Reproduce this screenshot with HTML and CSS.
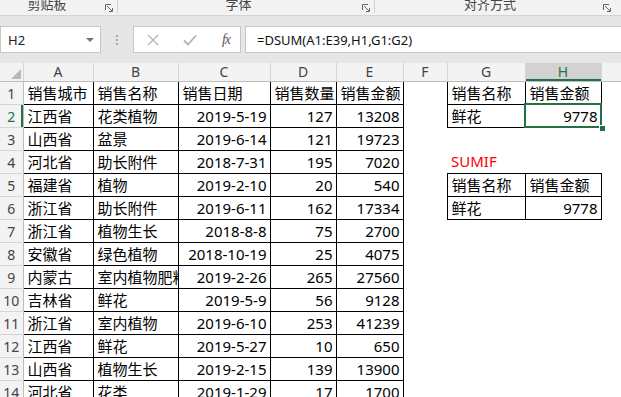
FILE: index.html
```html
<!DOCTYPE html>
<html lang="zh">
<head>
<meta charset="utf-8">
<title>Excel DSUM</title>
<link rel="stylesheet" href="styles.css">
</head>
<body>
<div class="app">
  <div class="ribbon">
    <div class="grp g1"><span class="glabel">剪贴板</span><svg class="launch" width="8" height="8" viewBox="0 0 8 8"><path d="M0.5 6V0.5H6M2 2L7 7M4 7.5H7.5V4" fill="none" stroke="#666" stroke-width="1"/></svg></div>
    <div class="grp g2"><span class="glabel">字体</span><svg class="launch" width="8" height="8" viewBox="0 0 8 8"><path d="M0.5 6V0.5H6M2 2L7 7M4 7.5H7.5V4" fill="none" stroke="#666" stroke-width="1"/></svg></div>
    <div class="grp g3"><span class="glabel">对齐方式</span><svg class="launch" width="8" height="8" viewBox="0 0 8 8"><path d="M0.5 6V0.5H6M2 2L7 7M4 7.5H7.5V4" fill="none" stroke="#666" stroke-width="1"/></svg></div>
  </div>
  <div class="fbar">
    <div class="namebox"><span>H2</span><svg width="8" height="4" viewBox="0 0 8 4"><path d="M0 0H8L4 4Z" fill="#777"/></svg></div>
    <div class="dots"><i></i><i></i><i></i></div>
    <div class="fxbox">
      <svg width="12" height="12" viewBox="0 0 12 12"><path d="M1 1L11 11M11 1L1 11" stroke="#b3b3b3" stroke-width="1.3" fill="none"/></svg>
      <svg width="14" height="12" viewBox="0 0 14 12"><path d="M1 6.5L5 10.5L13 1.5" stroke="#b3b3b3" stroke-width="1.8" fill="none"/></svg>
      <span class="fx">fx</span>
    </div>
    <div class="formula">=DSUM(A1:E39,H1,G1:G2)</div>
  </div>
  <table class="sheet">
    <colgroup>
      <col class="c-rh"><col class="c-a"><col class="c-b"><col class="c-c"><col class="c-d"><col class="c-e"><col class="c-f"><col class="c-g"><col class="c-h"><col class="c-i">
    </colgroup>
    <tr class="hdr">
      <th class="corner"><span class="tri"></span></th><th>A</th><th>B</th><th>C</th><th>D</th><th>E</th><th>F</th><th>G</th><th class="hsel">H</th><th></th>
    </tr>
    <tr><th class="rh">1</th><td class="b">销售城市</td><td class="b">销售名称</td><td class="b">销售日期</td><td class="b">销售数量</td><td class="b">销售金额</td><td></td><td class="b">销售名称</td><td class="b">销售金额</td><td></td></tr>
    <tr><th class="rh rsel">2</th><td class="b">江西省</td><td class="b">花类植物</td><td class="b r">2019-5-19</td><td class="b r">127</td><td class="b r">13208</td><td></td><td class="b">鲜花</td><td class="b r active">9778<span class="selbox"></span><span class="handle"></span></td><td></td></tr>
    <tr><th class="rh">3</th><td class="b">山西省</td><td class="b">盆景</td><td class="b r">2019-6-14</td><td class="b r">121</td><td class="b r">19723</td><td></td><td></td><td></td><td></td></tr>
    <tr><th class="rh">4</th><td class="b">河北省</td><td class="b">助长附件</td><td class="b r">2018-7-31</td><td class="b r">195</td><td class="b r">7020</td><td></td><td class="red">SUMIF</td><td></td><td></td></tr>
    <tr><th class="rh">5</th><td class="b">福建省</td><td class="b">植物</td><td class="b r">2019-2-10</td><td class="b r">20</td><td class="b r">540</td><td></td><td class="b">销售名称</td><td class="b">销售金额</td><td></td></tr>
    <tr><th class="rh">6</th><td class="b">浙江省</td><td class="b">助长附件</td><td class="b r">2019-6-11</td><td class="b r">162</td><td class="b r">17334</td><td></td><td class="b">鲜花</td><td class="b r">9778</td><td></td></tr>
    <tr><th class="rh">7</th><td class="b">浙江省</td><td class="b">植物生长</td><td class="b r">2018-8-8</td><td class="b r">75</td><td class="b r">2700</td><td></td><td></td><td></td><td></td></tr>
    <tr><th class="rh">8</th><td class="b">安徽省</td><td class="b">绿色植物</td><td class="b r">2018-10-19</td><td class="b r">25</td><td class="b r">4075</td><td></td><td></td><td></td><td></td></tr>
    <tr><th class="rh">9</th><td class="b">内蒙古</td><td class="b">室内植物肥料</td><td class="b r">2019-2-26</td><td class="b r">265</td><td class="b r">27560</td><td></td><td></td><td></td><td></td></tr>
    <tr><th class="rh">10</th><td class="b">吉林省</td><td class="b">鲜花</td><td class="b r">2019-5-9</td><td class="b r">56</td><td class="b r">9128</td><td></td><td></td><td></td><td></td></tr>
    <tr><th class="rh">11</th><td class="b">浙江省</td><td class="b">室内植物</td><td class="b r">2019-6-10</td><td class="b r">253</td><td class="b r">41239</td><td></td><td></td><td></td><td></td></tr>
    <tr><th class="rh">12</th><td class="b">江西省</td><td class="b">鲜花</td><td class="b r">2019-5-27</td><td class="b r">10</td><td class="b r">650</td><td></td><td></td><td></td><td></td></tr>
    <tr><th class="rh">13</th><td class="b">山西省</td><td class="b">植物生长</td><td class="b r">2019-2-15</td><td class="b r">139</td><td class="b r">13900</td><td></td><td></td><td></td><td></td></tr>
    <tr><th class="rh">14</th><td class="b">河北省</td><td class="b">花类</td><td class="b r">2019-1-29</td><td class="b r">17</td><td class="b r">1700</td><td></td><td></td><td></td><td></td></tr>
  </table>
</div>
</body>
</html>
```
FILE: styles.css
```css
html, body {
  margin: 0;
  padding: 0;
  background: #fff;
}
.app {
  width: 621px;
  height: 397px;
  overflow: hidden;
  font-family: "Noto Sans", "Noto Sans CJK SC", sans-serif;
}
.ribbon {
  display: flex;
  height: 15px;
  background: #f3f3f3;
  border-bottom: 1px solid #d5d5d5;
  overflow: hidden;
}
.grp {
  position: relative;
  display: flex;
  justify-content: center;
  align-items: flex-start;
  box-sizing: border-box;
  height: 15px;
}
.g1 { width: 118px; padding-right: 23px; border-right: 1px solid #d0d0d0; height: 13px; }
.g2 { width: 257px; padding-right: 15px; border-right: 1px solid #d0d0d0; height: 13px; }
.g3 { flex: 1; padding-right: 16px; }
.glabel {
  font-family: "Noto Sans CJK SC", sans-serif;
  font-size: 13px;
  line-height: 13px;
  margin-top: -3px;
  color: #444;
}
.launch {
  position: absolute;
  right: 4px;
  top: 4px;
}
.g3 .launch { right: 10px; }
.fbar {
  display: flex;
  align-items: center;
  height: 47px;
  background: #e6e6e6;
  box-sizing: border-box;
  padding: 10px 0 10px 0;
}
.namebox, .fxbox, .formula {
  height: 27px;
  box-sizing: border-box;
  background: #fff;
  border: 1px solid #c6c6c6;
  display: flex;
  align-items: center;
}
.namebox {
  width: 101px;
  padding: 0 6px 0 7px;
  justify-content: space-between;
  font-size: 13px;
  color: #222;
}
.dots {
  width: 32px;
  display: flex;
  flex-direction: column;
  align-items: center;
  gap: 2px;
}
.dots i {
  display: block;
  width: 2px;
  height: 2px;
  background: #a8a8a8;
}
.fxbox {
  width: 108px;
  padding: 0 10px 0 13px;
  justify-content: space-between;
}
.fx {
  font-family: "Liberation Serif", serif;
  font-style: italic;
  font-size: 14px;
  color: #555;
  letter-spacing: -1px;
}
.formula {
  flex: 1;
  margin-left: 4px;
  border-right: none;
  padding-left: 11px;
  font-size: 13px;
  color: #111;
}
.sheet {
  border-collapse: collapse;
  table-layout: fixed;
  width: 621px;
  font-size: 15px;
}
.c-rh { width: 23px; }
.c-a { width: 70px; }
.c-b { width: 85px; }
.c-c { width: 92px; }
.c-d { width: 66px; }
.c-e { width: 67px; }
.c-f { width: 44px; }
.c-g { width: 78px; }
.c-h { width: 76px; }
.c-i { width: 20px; }
.sheet tr.hdr { height: 18px; }
.hdr th {
  height: 17px;
  padding: 0;
  background: #f3f3f3;
  border-right: 1px solid #d5d5d5;
  border-bottom: 1px solid #bdbdbd;
  font-family: "Noto Sans", sans-serif;
  font-weight: normal;
  font-size: 14px;
  color: #444;
  line-height: 16px;
}
.hdr th.corner {
  position: relative;
}
.tri {
  position: absolute;
  right: 2px;
  bottom: 2px;
  width: 0;
  height: 0;
  border-left: 10px solid transparent;
  border-bottom: 10px solid #b9b9b9;
}
.hdr th.hsel {
  background: #d2d2d2;
  color: #217346;
  box-shadow: inset 0 -2px 0 #217346;
}
tr { height: 23px; }
th.rh {
  padding: 3px 0 0 0;
  background: #f3f3f3;
  border-bottom: 1px solid #d5d5d5;
  border-right: 1px solid #bdbdbd;
  font-family: "Noto Sans", sans-serif;
  font-weight: normal;
  font-size: 14px;
  color: #444;
  text-align: center;
  line-height: 18px;
}
th.rsel {
  color: #217346;
  box-shadow: inset -2px 0 0 #217346;
}
td {
  padding: 0 3px 0 4px;
  white-space: nowrap;
  overflow: hidden;
  line-height: 20px;
  color: #000;
  font-family: "Noto Sans CJK SC", sans-serif;
}
td.b {
  border: 1px solid #000;
}
td.r {
  text-align: right;
  font-family: "Noto Sans", sans-serif;
}
td.red {
  color: #ff0000;
  overflow: visible;
  font-family: "Noto Sans", sans-serif;
}
td.active {
  position: relative;
  overflow: visible;
}
.selbox {
  position: absolute;
  left: -2px;
  top: -2px;
  right: -1px;
  bottom: -1px;
  border: 2px solid #217346;
}
.handle {
  position: absolute;
  right: -5px;
  bottom: -5px;
  width: 5px;
  height: 5px;
  background: #217346;
  border: 1px solid #fff;
}
```
